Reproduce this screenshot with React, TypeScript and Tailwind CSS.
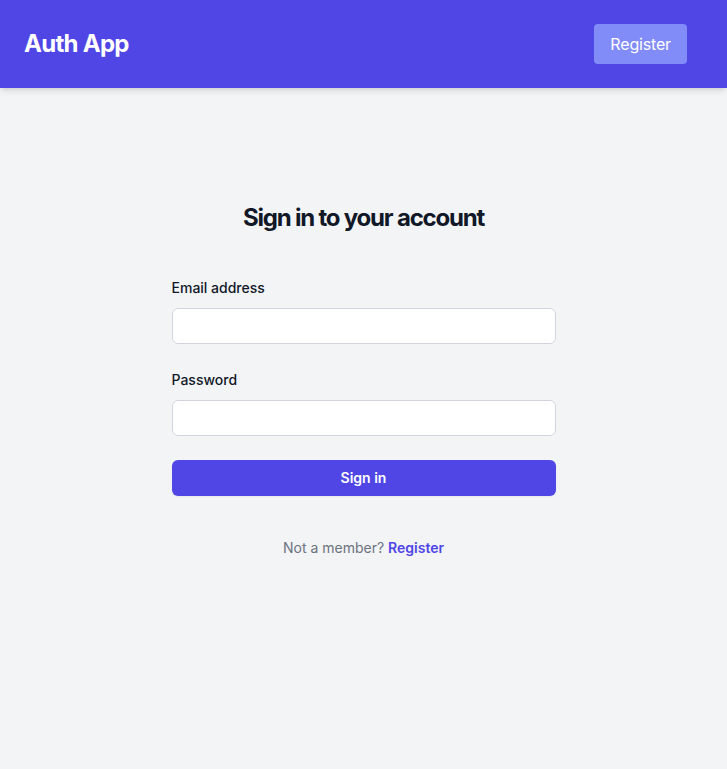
import React from "react";

export default function App() {
  return (
    <div className="min-h-screen bg-[#f3f4f6] font-['Inter',sans-serif]">
      {/* Navbar */}
      <header className="bg-[#4f46e5] shadow-md">
        <div className="flex items-center justify-between py-6 pl-6 pr-10">
          <h1 className="text-2xl font-bold tracking-[-0.03em] text-white">Auth App</h1>
          <a
            href="#register"
            className="rounded bg-[#818cf8] px-4 py-2 text-base tracking-[-0.01em] text-white hover:bg-[#6366f1]"
          >
            Register
          </a>
        </div>
      </header>

      {/* Sign in */}
      <main className="flex flex-col px-6 py-12">
        <h2 className="mt-16 text-center text-2xl/9 font-bold tracking-[-0.05em] text-[#111827]">
          Sign in to your account
        </h2>

        <div className="mx-auto mt-10 w-full max-w-sm">
          <form className="space-y-6" onSubmit={(e) => e.preventDefault()}>
            <div>
              <label htmlFor="email" className="block text-sm/6 font-medium text-[#111827]">
                Email address
              </label>
              <input
                id="email"
                type="email"
                className="mt-2 block w-full rounded-md bg-white px-3 py-1.5 text-sm/6 text-[#111827] outline-1 -outline-offset-1 outline-[#d1d5db] focus:outline-2 focus:outline-[#4f46e5]"
              />
            </div>

            <div>
              <label htmlFor="password" className="block text-sm/6 font-medium text-[#111827]">
                Password
              </label>
              <input
                id="password"
                type="password"
                className="mt-2 block w-full rounded-md bg-white px-3 py-1.5 text-sm/6 text-[#111827] outline-1 -outline-offset-1 outline-[#d1d5db] focus:outline-2 focus:outline-[#4f46e5]"
              />
            </div>

            <button
              type="submit"
              className="flex w-full justify-center rounded-md bg-[#4f46e5] px-3 py-1.5 text-sm/6 font-semibold text-white shadow-xs hover:bg-[#6366f1]"
            >
              Sign in
            </button>
          </form>

          <p className="mt-10 text-center text-sm/6 text-[#6b7280]">
            Not a member?{" "}
            <a href="#register" className="font-semibold text-[#4f46e5] hover:text-[#6366f1]">
              Register
            </a>
          </p>
        </div>
      </main>
    </div>
  );
}
